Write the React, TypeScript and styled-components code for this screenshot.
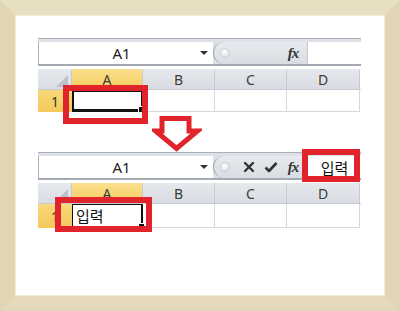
import React from "react";
import styled, { createGlobalStyle } from "styled-components";

const GlobalStyle = createGlobalStyle`
  html, body {
    margin: 0;
    padding: 0;
    background: #ffffff;
  }
  * {
    box-sizing: border-box;
  }
`;

const Frame = styled.div`
  width: 400px;
  height: 311px;
  border-style: solid;
  border-width: 15px;
  border-color: #e8dfc3 #e0d6b5 #e4dabb #e1d6b3;
  box-shadow: inset 0 0 0 1px #f1ebd8;
  background: #ffffff;
  padding: 23px 0 0 23px;
  font-family: "Noto Sans", "Noto Sans CJK KR", sans-serif;
`;

const Sheet = styled.div`
  position: relative;
  width: 323px;
`;

const FormulaBar = styled.div`
  display: flex;
  height: 28px;
  padding-top: 3px;
  border-top: 1px solid #a9b0ba;
  border-bottom: 2px solid #a3aab3;
  background: #dde1e7;
`;

const NameBox = styled.div`
  width: 175px;
  display: flex;
  align-items: center;
  background: #ffffff;
  border-left: 1px solid #a9b0ba;
  padding-right: 5px;
`;

const NameText = styled.span`
  flex: 1;
  text-align: center;
  font-size: 15px;
  color: #222;
  padding-left: 4px;
`;

const DropArrow = styled.span`
  width: 0;
  height: 0;
  border-left: 4px solid transparent;
  border-right: 4px solid transparent;
  border-top: 4px solid #333;
`;

const FuncArea = styled.div`
  width: 94px;
  display: flex;
  align-items: center;
  gap: 8px;
  padding: 0 7px 0 6px;
  border-left: 1px solid #9ca4ae;
  border-radius: 11px 0 0 11px;
  background: linear-gradient(#e6e9ed, #d9dde3);
`;

const Grip = styled.span`
  width: 10px;
  height: 10px;
  border-radius: 50%;
  margin-right: auto;
  background: radial-gradient(circle at 40% 35%, #ffffff, #d3d8de);
  border: 1px solid #c9ced5;
`;

const IconSlot = styled.span`
  width: 14px;
  display: flex;
  justify-content: center;
  align-items: center;
`;

const Fx = styled.span`
  width: 14px;
  text-align: center;
  font-family: "Liberation Serif", serif;
  font-style: italic;
  font-weight: bold;
  font-size: 15px;
  color: #333;
  letter-spacing: -1px;
`;

const FormulaInput = styled.div`
  flex: 1;
  display: flex;
  align-items: center;
  justify-content: center;
  background: #ffffff;
  border-left: 1px solid #c3c9d1;
  font-size: 15px;
  color: #111;
`;

const Grid = styled.div`
  display: grid;
  grid-template-columns: 34px 71px 72px 72px 73px;
`;

const HeaderRow = styled(Grid)`
  margin-top: 3px;
  height: 21px;
  border-bottom: 1px solid #c6cbd2;
`;

const Corner = styled.div`
  position: relative;
  background: linear-gradient(#e6e9ed, #d9dde3);
  border-right: 1px solid #c6cbd2;

  &::after {
    content: "";
    position: absolute;
    right: 3px;
    bottom: 2px;
    border-left: 12px solid transparent;
    border-bottom: 12px solid #bcc2ca;
  }
`;

const ColHead = styled.div<{ $active?: boolean }>`
  display: flex;
  align-items: center;
  justify-content: center;
  font-size: 14px;
  color: #3c3c3c;
  border-right: 1px solid #c6cbd2;
  background: ${({ $active }) =>
    $active
      ? "linear-gradient(#fbe08e, #f5cb5e)"
      : "linear-gradient(#e5e8ec, #d9dde3)"};
`;

const BodyRow = styled(Grid)`
  height: 22px;
`;

const RowHead = styled.div`
  display: flex;
  align-items: center;
  justify-content: center;
  font-size: 14px;
  color: #333;
  background: linear-gradient(#f9d878, #f4c95c);
`;

const Cell = styled.div<{ $active?: boolean; $editing?: boolean }>`
  position: relative;
  display: flex;
  align-items: center;
  padding-left: 3px;
  font-size: 15px;
  color: #111;
  border-right: 1px solid #d4d7dc;
  border-bottom: 1px solid #d4d7dc;
  ${({ $active, $editing }) =>
    $active &&
    `
    border: ${$editing ? "1px" : "2px"} solid #111;
    border-right-width: 2px;
    border-bottom-width: ${$editing ? "2px" : "3px"};
    &::after {
      content: "";
      position: absolute;
      right: -4px;
      bottom: -4px;
      width: 5px;
      height: 5px;
      background: #111;
      border: 1px solid #fff;
    }
  `}
`;

const Highlight = styled.div<{ $x: number; $y: number; $w: number; $h: number }>`
  position: absolute;
  left: ${({ $x }) => $x}px;
  top: ${({ $y }) => $y}px;
  width: ${({ $w }) => $w}px;
  height: ${({ $h }) => $h}px;
  border: 6px solid #e1232b;
`;

const ArrowWrap = styled.div`
  margin: 4px 0 0 114px;
  height: 36px;
  display: flex;
`;

const Cross = () => (
  <svg width="12" height="12" viewBox="0 0 12 12">
    <path d="M2 2 L10 10 M10 2 L2 10" stroke="#333" strokeWidth="2.4" strokeLinecap="round" />
  </svg>
);

const Check = () => (
  <svg width="14" height="12" viewBox="0 0 14 12">
    <path d="M1.5 6.5 L5 10 L12.5 2" stroke="#333" strokeWidth="2.6" fill="none" strokeLinejoin="round" />
  </svg>
);

const DownArrow = () => (
  <svg width="50" height="36" viewBox="0 0 50 36">
    <path
      d="M10 2.5 H37 V15 H45.5 L24.5 32.5 L3.5 15 H10 Z"
      fill="#ffffff"
      stroke="#e1232b"
      strokeWidth="5"
      strokeLinejoin="miter"
    />
  </svg>
);

type ExcelProps = {
  editing?: boolean;
  value?: string;
  children?: React.ReactNode;
};

const Excel = ({ editing, value, children }: ExcelProps) => (
  <Sheet>
    <FormulaBar>
      <NameBox>
        <NameText>A1</NameText>
        <DropArrow />
      </NameBox>
      <FuncArea>
        <Grip />
        {editing && (
          <>
            <IconSlot>
              <Cross />
            </IconSlot>
            <IconSlot>
              <Check />
            </IconSlot>
          </>
        )}
        <Fx>fx</Fx>
      </FuncArea>
      <FormulaInput>{value}</FormulaInput>
    </FormulaBar>
    <HeaderRow>
      <Corner />
      <ColHead $active>A</ColHead>
      <ColHead>B</ColHead>
      <ColHead>C</ColHead>
      <ColHead>D</ColHead>
    </HeaderRow>
    <BodyRow>
      <RowHead>1</RowHead>
      <Cell $active $editing={editing}>
        {value}
      </Cell>
      <Cell />
      <Cell />
      <Cell />
    </BodyRow>
    {children}
  </Sheet>
);

export default function App() {
  return (
    <>
      <GlobalStyle />
      <Frame>
        <Excel>
          <Highlight $x={25} $y={47} $w={85} $h={39} />
        </Excel>
        <ArrowWrap>
          <DownArrow />
        </ArrowWrap>
        <Excel editing value="입력">
          <Highlight $x={17} $y={45} $w={97} $h={35} />
          <Highlight $x={264} $y={-3} $w={58} $h={33} />
        </Excel>
      </Frame>
    </>
  );
}
